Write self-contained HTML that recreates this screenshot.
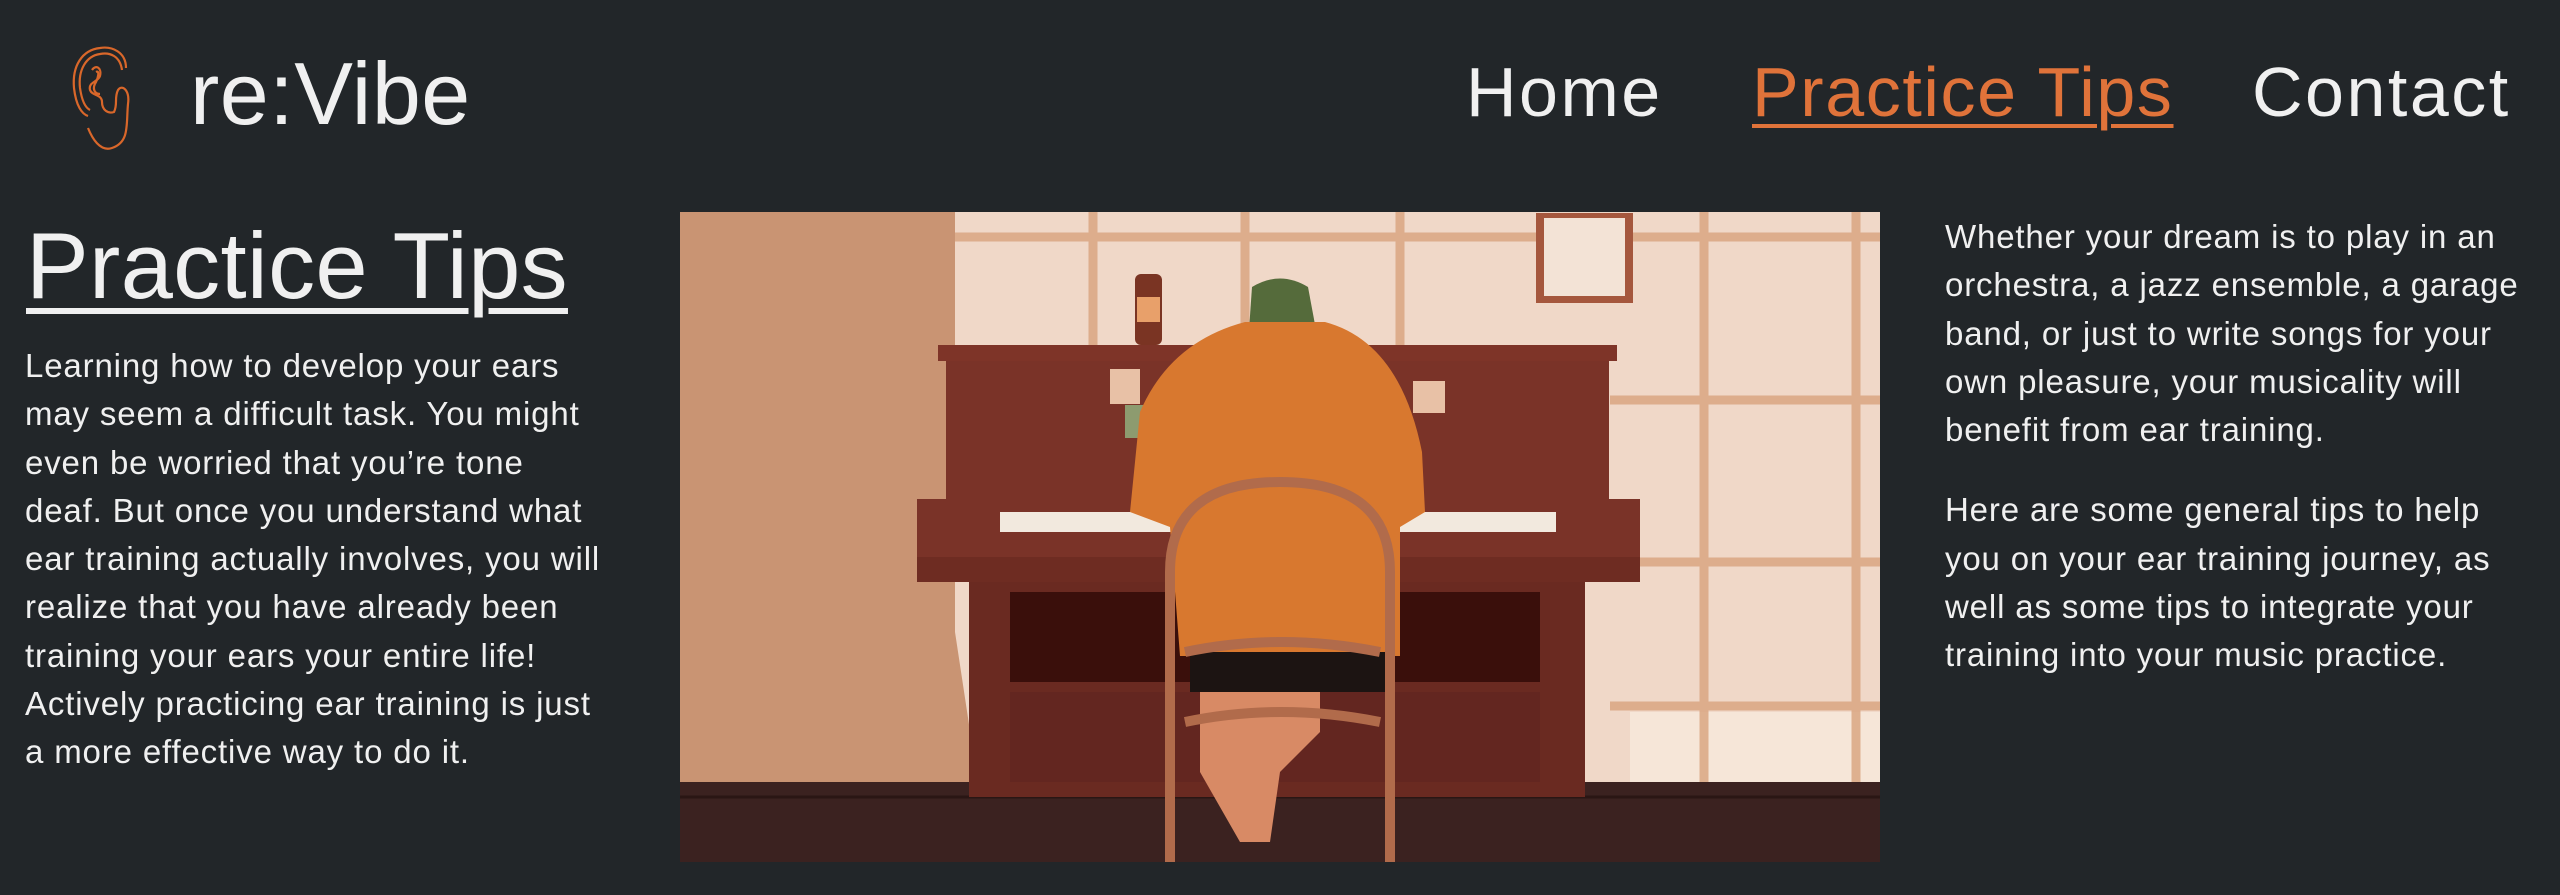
<!DOCTYPE html>
<html><head><meta charset="utf-8"><style>
html,body{margin:0;padding:0;background:#222629;width:2560px;height:895px;overflow:hidden;font-family:"Liberation Sans",sans-serif;color:#f0f0f0}
.abs{position:absolute;white-space:nowrap}
.nav{font-size:70px;font-weight:300;top:50px;line-height:84px;letter-spacing:2.5px}
p{margin:0}
.txt{font-size:33px;line-height:48.3px;letter-spacing:0.85px}
</style></head><body>
<svg class="abs" style="left:68px;top:44px" width="74" height="112" viewBox="0 0 74 112" fill="none" stroke="#d9672a" stroke-width="2.2">
<path d="M58 24 C58 8 44 2 32 4 C14 6 4 22 6 44 C8 62 14 70 20 72"/>
<path d="M54 26 C52 12 42 8 32 10 C18 12 10 26 12 44 C14 58 18 64 22 66"/>
<path d="M24 26 C28 20 34 24 32 32 C30 38 20 38 22 46 C24 52 34 50 34 58 C34 66 40 70 46 68 C50 60 46 54 50 46 C54 40 62 46 60 60 C58 80 62 98 44 104 C32 108 24 94 20 84"/>
<path d="M28 28 C32 26 30 34 28 38 C24 44 26 50 32 50"/>
</svg>
<div class="abs" style="left:190px;top:44px;font-size:88px;font-weight:300;line-height:100px;letter-spacing:0.5px">re:Vibe</div>
<div class="abs nav" style="left:1466px">Home</div>
<div class="abs nav" style="left:1752px;color:#e0733a;letter-spacing:1.6px;text-decoration:underline;text-decoration-thickness:4px;text-underline-offset:8px">Practice Tips</div>
<div class="abs nav" style="left:2252px">Contact</div>
<div class="abs" style="left:26px;top:216px;font-size:94px;font-weight:300;line-height:100px;letter-spacing:0.3px;text-decoration:underline;text-decoration-thickness:6px;text-underline-offset:10px">Practice Tips</div>
<div class="abs txt" style="left:25px;top:342px">Learning how to develop your ears<br>may seem a difficult task. You might<br>even be worried that you’re tone<br>deaf. But once you understand what<br>ear training actually involves, you will<br>realize that you have already been<br>training your ears your entire life!<br>Actively practicing ear training is just<br>a more effective way to do it.</div>
<div class="abs txt" style="left:1945px;top:213px">Whether your dream is to play in an<br>orchestra, a jazz ensemble, a garage<br>band, or just to write songs for your<br>own pleasure, your musicality will<br>benefit from ear training.<p style="margin-top:32px">Here are some general tips to help<br>you on your ear training journey, as<br>well as some tips to integrate your<br>training into your music practice.</p></div>
<svg class="abs" style="left:680px;top:212px" width="1200" height="650" viewBox="0 0 1200 650">
<rect width="1200" height="650" fill="#f0d8c8"/>
<rect x="950" y="500" width="250" height="80" fill="#f6e6d8"/>
<g stroke="#d9a37e" stroke-width="9" opacity="0.8">
<line x1="413" y1="0" x2="413" y2="140"/><line x1="565" y1="0" x2="565" y2="140"/><line x1="720" y1="0" x2="720" y2="140"/>
<line x1="1024" y1="0" x2="1024" y2="570"/><line x1="1176" y1="0" x2="1176" y2="570"/>
<line x1="275" y1="25" x2="1200" y2="25"/><line x1="930" y1="188" x2="1200" y2="188"/><line x1="930" y1="350" x2="1200" y2="350"/><line x1="930" y1="494" x2="1200" y2="494"/>
</g>
<path d="M0 0 H275 V420 L300 585 H0Z" fill="#c99473"/>
<rect x="0" y="570" width="1200" height="80" fill="#3b2220"/>
<path d="M0 585 H1200" stroke="#2a1614" stroke-width="3"/>
<rect x="856" y="1" width="97" height="90" fill="#a5573d"/><rect x="864" y="6" width="81" height="78" fill="#f3e3d6"/>
<rect x="455" y="62" width="27" height="71" rx="6" fill="#7a3423"/><rect x="457" y="85" width="23" height="25" fill="#e8a06a"/>
<rect x="258" y="133" width="679" height="16" fill="#7e3428"/>
<rect x="266" y="149" width="663" height="140" fill="#7a3328"/>
<rect x="237" y="287" width="723" height="83" fill="#7a3328"/>
<rect x="320" y="300" width="556" height="20" fill="#f2e9de"/>
<rect x="237" y="345" width="723" height="25" fill="#6e2c22"/>
<rect x="289" y="370" width="616" height="215" fill="#6a2a21"/>
<rect x="330" y="380" width="530" height="90" fill="#3a0f0b"/>
<rect x="330" y="480" width="530" height="90" fill="#632620"/>
<rect x="430" y="157" width="30" height="35" fill="#e8c1a6"/><rect x="445" y="193" width="32" height="33" fill="#8d9b6f"/><rect x="733" y="169" width="32" height="32" fill="#e8c1a6"/>
<path d="M572 75 Q600 58 628 75 L636 118 H569Z" fill="#556b3b"/>
<path d="M565 110 L645 110 Q720 130 742 240 L745 300 L720 315 L720 444 L500 444 L490 315 L450 300 L460 200 Q490 130 565 110Z" fill="#d8782f"/>
<rect x="510" y="440" width="200" height="40" fill="#1c1412"/>
<path d="M520 480 L520 560 L560 630 L590 630 L600 560 L640 520 L640 480Z" fill="#d88a65"/>
<g fill="none" stroke="#b16b4b" stroke-width="10">
<path d="M490 650 L490 360 Q490 270 600 270 Q710 270 710 360 L710 650"/>
<path d="M505 440 Q600 420 700 440"/><path d="M505 510 Q600 490 700 510"/>
</g>
</svg>
</body></html>
